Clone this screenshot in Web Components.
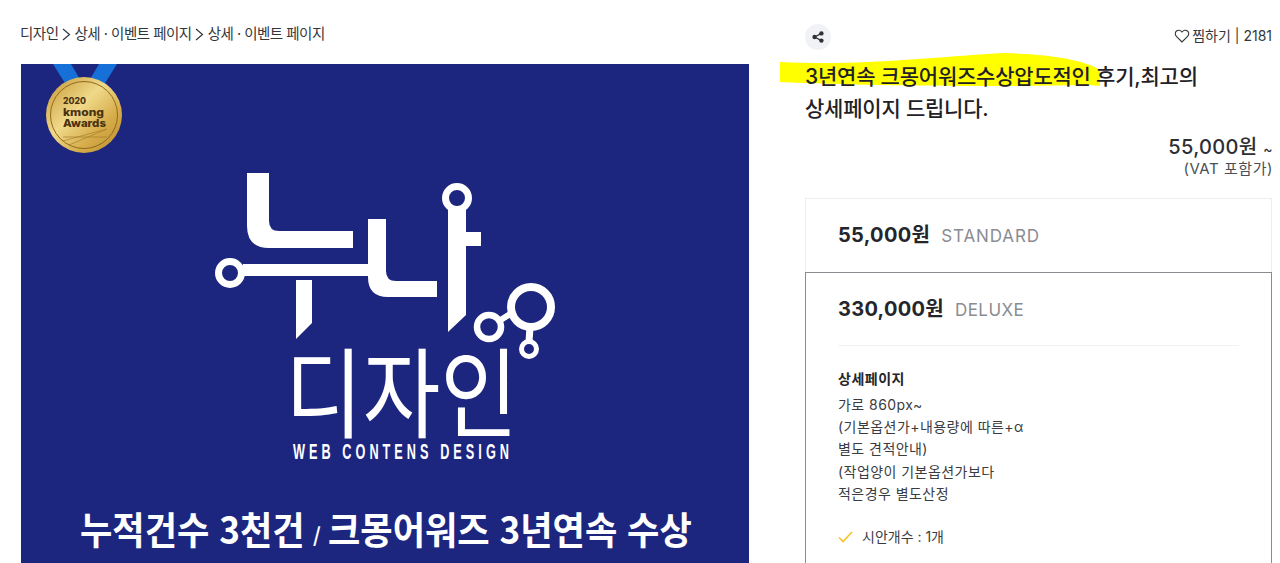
<!DOCTYPE html>
<html lang="ko">
<head>
<meta charset="utf-8">
<title>상세페이지</title>
<style>
html, body { margin: 0; height: 563px; overflow: hidden; background: #fff; }
body { font-family: Inter, "Noto Sans CJK KR", sans-serif; color: #1f2126; }
</style>
</head>
<body>
<gig-page>
  <gig-crumbs slot="left"><span>디자인</span><span>상세 · 이벤트 페이지</span><span>상세 · 이벤트 페이지</span></gig-crumbs>
  <gig-banner slot="left"></gig-banner>
  <gig-head slot="right" likes="2181" price="55,000원" note="(VAT 포함가)">
    <span slot="first">3년연속 크몽어워즈수상압도적인 후기,최고의</span>
    <span slot="second">상세페이지 드립니다.</span>
  </gig-head>
  <gig-package slot="right" price="55,000원" grade="STANDARD"></gig-package>
  <gig-package slot="right" price="330,000원" grade="DELUXE" open>
    <strong slot="name">상세페이지</strong>
    <span>가로 860px~</span>
    <span>(기본옵션가+내용량에 따른+α</span>
    <span>별도 견적안내)</span>
    <span>(작업양이 기본옵션가보다</span>
    <span>적은경우 별도산정</span>
    <gig-check slot="checks">시안개수 : 1개</gig-check>
  </gig-package>
</gig-page>

<script>
const KR = `Inter, "Noto Sans CJK KR", sans-serif`;

class GigPage extends HTMLElement {
  constructor () {
    super();
    this.attachShadow({ mode: 'open' }).innerHTML = `
<style>
:host { display: flex; height: 563px; overflow: hidden; padding-left: 21px; box-sizing: border-box; }
.left { width: 728px; flex: none; }
.right { width: 467px; margin-left: 56px; flex: none; display: flex; flex-direction: column; }
</style>
<div class="left"><slot name="left"></slot></div>
<div class="right"><slot name="right"></slot></div>`;
  }
}

class GigCrumbs extends HTMLElement {
  connectedCallback () {
    const items = [...this.children];
    items.slice(1).forEach(el => {
      const mark = document.createElementNS('http://www.w3.org/2000/svg', 'svg');
      mark.setAttribute('width', '9');
      mark.setAttribute('height', '13');
      mark.setAttribute('viewBox', '0 0 9 13');
      mark.innerHTML = '<path d="M1 1l6.5 5.5L1 12" fill="none" stroke="#33363b" stroke-width="1.2"/>';
      mark.style.margin = '0 4px 0 3px';
      this.insertBefore(mark, el);
    });
  }
  constructor () {
    super();
    this.attachShadow({ mode: 'open' }).innerHTML = `
<style>
:host { display: flex; align-items: center; height: 64px; margin-left: -1px; box-sizing: border-box; padding-top: 4px;
  font: 14.5px/20px ${KR}; letter-spacing: -.5px; color: #33363b; white-space: nowrap; }
::slotted(span) { display: inline-block; }
</style>
<slot></slot>`;
  }
}

class GigMedal extends HTMLElement {
  constructor () {
    super();
    this.attachShadow({ mode: 'open' }).innerHTML = `
<style>
:host { display: block; position: absolute; left: 24px; top: 0; width: 80px; height: 92px; }
svg { display: block; }
text { font-family: Inter, "Liberation Sans", sans-serif; font-weight: 800; fill: #4a3210; }
</style>
<svg width="80" height="92" viewBox="0 0 80 92">
  <defs>
    <linearGradient id="gold" x1="0" y1="0" x2="1" y2="1">
      <stop offset="0" stop-color="#c3932f"/>
      <stop offset=".42" stop-color="#f0d98a"/>
      <stop offset=".7" stop-color="#d6ac4a"/>
      <stop offset="1" stop-color="#b98a2a"/>
    </linearGradient>
  </defs>
  <path d="M8 0h18l14 24L54 0h18L52 32H28z" fill="#1670d8"/>
  <circle cx="39" cy="51" r="38" fill="url(#gold)"/>
  <circle cx="39" cy="51" r="33.5" fill="none" stroke="#8f6a1e" stroke-width="1"/>
  <path d="M18 77l44-12M24 81l38-16M18 73h44" stroke="#a57f2c" stroke-width=".7" fill="none"/>
  <text x="18" y="40" font-size="8.6" textLength="23" lengthAdjust="spacingAndGlyphs">2020</text>
  <text x="18" y="52" font-size="10.5" textLength="41" lengthAdjust="spacingAndGlyphs">kmong</text>
  <text x="18" y="63" font-size="10.5" textLength="43" lengthAdjust="spacingAndGlyphs">Awards</text>
</svg>`;
  }
}

class GigBanner extends HTMLElement {
  constructor () {
    super();
    this.attachShadow({ mode: 'open' }).innerHTML = `
<style>
:host { display: block; position: relative; width: 728px; height: 499px; background: #1d267f; overflow: hidden; }
svg { display: block; }
text { fill: #fff; }
.big { font-family: "Noto Sans CJK KR", sans-serif; font-weight: 700; font-size: 38px; }
</style>
<gig-medal></gig-medal>
<svg width="728" height="499" viewBox="21 64 728 499" fill="#fff">
  <!-- logo mark -->
  <path d="M247 173h22v48q0 10 10 10h74v17h-84q-22 0-22-22z"/>
  <path d="M243 264h125v-45h18v52q0 10 10 10h41v16h-49q-20 0-20-20v-1H243z"/>
  <path d="M296 280h16v43l-16 16z"/>
  <path d="M448 210h18v22h15v14h-15v69l-18 17z"/>
  <g fill="none" stroke="#fff">
    <circle cx="230" cy="273" r="11.5" stroke-width="7"/>
    <circle cx="457" cy="198" r="11.5" stroke-width="7"/>
    <circle cx="531" cy="307" r="20" stroke-width="8"/>
    <circle cx="489" cy="327" r="12" stroke-width="6.5"/>
    <circle cx="529" cy="349" r="7.5" stroke-width="5"/>
    <path d="M499 321l16-10" stroke-width="6"/>
    <path d="M530 327l-1 15" stroke-width="7"/>
  </g>
  <text x="285" y="430" font-family="'Noto Sans CJK KR', sans-serif" font-size="98" textLength="233" lengthAdjust="spacingAndGlyphs">디자인</text>
  <text x="293" y="459" font-family="'Liberation Sans', sans-serif" font-weight="700" font-size="22" textLength="220" lengthAdjust="spacingAndGlyphs" style="letter-spacing:7px">WEB CONTENS DESIGN</text>
  <text class="big" transform="translate(80 544) scale(.925 1)">누적건수 3천건</text>
  <text x="313" y="544" font-family="'Noto Sans CJK KR', sans-serif" font-weight="700" font-size="20">/</text>
  <text class="big" transform="translate(328 544) scale(.925 1)">크몽어워즈 3년연속 수상</text>
</svg>`;
  }
}

class GigHead extends HTMLElement {
  constructor () {
    super();
    const likes = this.getAttribute('likes');
    const price = this.getAttribute('price');
    const note = this.getAttribute('note');
    this.attachShadow({ mode: 'open' }).innerHTML = `
<style>
:host { display: block; position: relative; height: 198px; box-sizing: border-box; padding-top: 24px; }
.tools { display: flex; justify-content: space-between; align-items: center; height: 26px; }
.share { width: 26px; height: 26px; border-radius: 50%; background: #f1f2f5; display: flex; align-items: center; justify-content: center; }
.like { display: flex; align-items: center; gap: 2px; margin-bottom: 2px; font: 14px/20px ${KR}; letter-spacing: 0; color: #33363b; }
.mark { position: absolute; left: -25px; top: 53px; z-index: 0; }
h1 { position: relative; margin: 11px 0 0; font: 500 21px/32px ${KR}; letter-spacing: -.22px; color: #1f2126; }
h1 span { display: block; }
.price { margin: 10px -1px 0 0; text-align: right; font: 500 20px/24px ${KR}; letter-spacing: .35px; color: #2c2e33; white-space: nowrap; }
.price small { font-size: 14px; }
.note { margin-right: -1px; text-align: right; font: 15px/16px ${KR}; letter-spacing: .55px; color: #4b4e55; }
</style>
<div class="tools">
  <div class="share">
    <svg width="12" height="12" viewBox="0 0 12 12"><g fill="#303238"><circle cx="2.6" cy="6" r="2.2"/><circle cx="9.4" cy="2.4" r="2.2"/><circle cx="9.4" cy="9.6" r="2.2"/></g><path d="M2.6 6l6.8-3.6M2.6 6l6.8 3.6" stroke="#303238" stroke-width="1.2"/></svg>
  </div>
  <div class="like">
    <svg width="16" height="14" viewBox="0 0 15 14"><path d="M7.5 13L1.9 7.3C.3 5.6.5 3.2 2 2 3.700.7 6 1 7.500 3 9 1 11.300.7 13 2c1.500 1.200 1.700 3.600.1 5.300z" fill="none" stroke="#33363b" stroke-width="1.1"/></svg>
    <span>찜하기 | ${likes}</span>
  </div>
</div>
<svg class="mark" width="324" height="36" viewBox="780 53 324 36"><path d="M780 62C860 66 920 58 1003 53c47 1 82 7 97 17v16l-10-1c-90 2-220 1-310-3z" fill="#ffff00"/></svg>
<h1><span><slot name="first"></slot></span><span><slot name="second"></slot></span></h1>
<div class="price">${price} <small>~</small></div>
<div class="note">${note}</div>`;
  }
}

class GigPackage extends HTMLElement {
  constructor () {
    super();
    const price = this.getAttribute('price');
    const grade = this.getAttribute('grade');
    this.attachShadow({ mode: 'open' }).innerHTML = `
<style>
:host { display: block; box-sizing: border-box; padding: 0 32px; border: 1px solid #eceef1; border-bottom: 0; height: 74px; flex: none; }
:host([open]) { border-color: #8a8c91; height: auto; flex: 1; }
.top { display: flex; align-items: center; gap: 11px; height: 72px; white-space: nowrap; }
b { font: 700 20px/26px ${KR}; letter-spacing: .3px; color: #24262b; }
i { font: 400 17px/26px ${KR}; letter-spacing: .4px; color: #8a8c92; padding-top: 2px; }
:host([grade=STANDARD]) i { letter-spacing: .9px; }
.body { display: none; border-top: 1px solid #f1f2f4; padding-top: 22px; }
:host([open]) .body { display: block; }
::slotted([slot=name]) { display: block; font: 700 14px/22px ${KR}; letter-spacing: .5px; color: #24262b; margin-bottom: 4px; }
.lines { display: flex; flex-direction: column; font: 14px/22.2px ${KR}; letter-spacing: .45px; color: #3a3c42; }
.checks { margin-top: 21px; }
</style>
<div class="top"><b>${price}</b><i>${grade}</i></div>
<div class="body">
  <slot name="name"></slot>
  <div class="lines"><slot></slot></div>
  <div class="checks"><slot name="checks"></slot></div>
</div>`;
  }
}

class GigCheck extends HTMLElement {
  constructor () {
    super();
    this.attachShadow({ mode: 'open' }).innerHTML = `
<style>
:host { display: flex; align-items: center; gap: 9px; font: 14px/22px ${KR}; letter-spacing: 0; color: #3a3c42; }
svg { flex: none; }
</style>
<svg width="15" height="12" viewBox="0 0 15 12"><path d="M1 6.500l4 4L14 1" fill="none" stroke="#f7c325" stroke-width="1.600"/></svg>
<slot></slot>`;
  }
}

customElements.define('gig-medal', GigMedal);
customElements.define('gig-banner', GigBanner);
customElements.define('gig-crumbs', GigCrumbs);
customElements.define('gig-head', GigHead);
customElements.define('gig-package', GigPackage);
customElements.define('gig-check', GigCheck);
customElements.define('gig-page', GigPage);
</script>
</body>
</html>
